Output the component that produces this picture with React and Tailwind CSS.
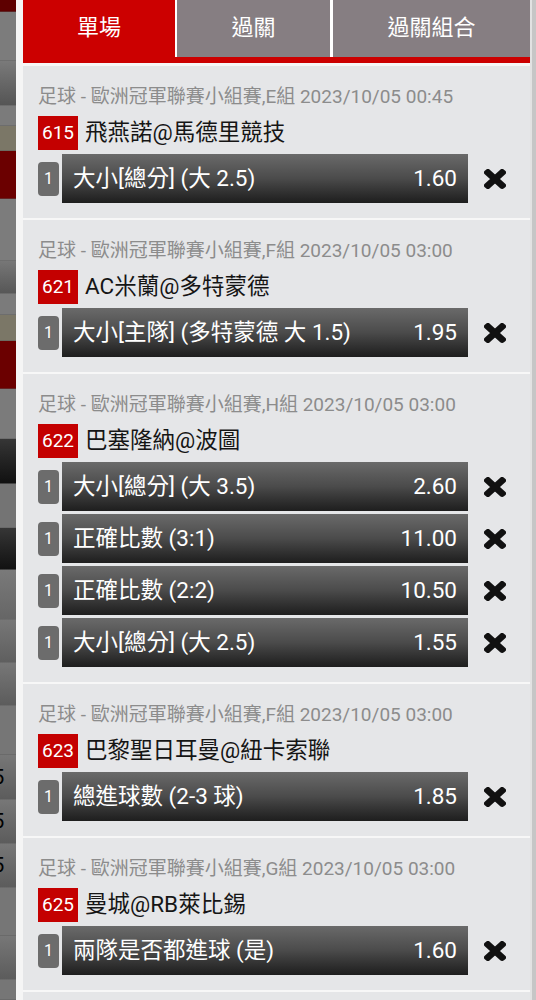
import React from 'react'

const FONT = { fontFamily: 'Roboto, "Noto Sans CJK TC", sans-serif' }

// dimmed page behind the slip, only a sliver shows on the left
const STRIP = [
  { h: 12, c: 'bg-[#5e0000]' },
  { h: 50, c: 'bg-[#7c7c7c]' },
  { h: 45, c: 'bg-linear-to-b from-[#7a7a7a] to-[#555]' },
  { h: 21, c: 'bg-[#7b7b7b]' },
  { h: 25, c: 'bg-[#7b7767]' },
  { h: 49, c: 'bg-[#6b0000]' },
  { h: 62, c: 'bg-[#7c7c7c]' },
  { h: 34, c: 'bg-linear-to-b from-[#777] to-[#575757]' },
  { h: 21, c: 'bg-[#7b7b7b]' },
  { h: 26, c: 'bg-[#7b7767]' },
  { h: 49, c: 'bg-[#6b0000]' },
  { h: 51, c: 'bg-[#7b7b7b]' },
  { h: 45, c: 'bg-linear-to-b from-[#363636] to-[#111]' },
  { h: 45, c: 'bg-[#747474]' },
  { h: 42, c: 'bg-linear-to-b from-[#363636] to-[#121212]' },
  { h: 51, c: 'bg-linear-to-b from-[#7a7a7a] to-[#666]' },
  { h: 44, c: 'bg-linear-to-b from-[#777] to-[#5f5f5f]' },
  { h: 43, c: 'bg-linear-to-b from-[#777] to-[#5c5c5c]' },
  { h: 50, c: 'bg-[#767676]' },
  { h: 45, c: 'bg-linear-to-b from-[#777] to-[#5c5c5c]', five: true },
  { h: 45, c: 'bg-linear-to-b from-[#777] to-[#5c5c5c]', five: true },
  { h: 44, c: 'bg-linear-to-b from-[#777] to-[#5c5c5c]', five: true },
  { h: 49, c: 'bg-[#767676]' },
  { h: 45, c: 'bg-linear-to-b from-[#777] to-[#5c5c5c]' },
  { h: 20, c: 'bg-[#767676]' },
]

const CARDS = [
  {
    league: '足球 - 歐洲冠軍聯賽小組賽,E組 2023/10/05 00:45',
    no: '615', match: '飛燕諾@馬德里競技',
    bets: [{ name: '大小[總分] (大 2.5)', odds: '1.60' }],
  },
  {
    league: '足球 - 歐洲冠軍聯賽小組賽,F組 2023/10/05 03:00',
    no: '621', match: 'AC米蘭@多特蒙德',
    bets: [{ name: '大小[主隊] (多特蒙德 大 1.5)', odds: '1.95' }],
  },
  {
    league: '足球 - 歐洲冠軍聯賽小組賽,H組 2023/10/05 03:00',
    no: '622', match: '巴塞隆納@波圖',
    bets: [
      { name: '大小[總分] (大 3.5)', odds: '2.60' },
      { name: '正確比數 (3:1)', odds: '11.00' },
      { name: '正確比數 (2:2)', odds: '10.50' },
      { name: '大小[總分] (大 2.5)', odds: '1.55' },
    ],
  },
  {
    league: '足球 - 歐洲冠軍聯賽小組賽,F組 2023/10/05 03:00',
    no: '623', match: '巴黎聖日耳曼@紐卡索聯',
    bets: [{ name: '總進球數 (2-3 球)', odds: '1.85' }],
  },
  {
    league: '足球 - 歐洲冠軍聯賽小組賽,G組 2023/10/05 03:00',
    no: '625', match: '曼城@RB萊比錫',
    bets: [{ name: '兩隊是否都進球 (是)', odds: '1.60' }],
  },
]

function CloseIcon() {
  return (
    <svg className="w-[22px] h-[20px]" viewBox="-14 66 380 380" preserveAspectRatio="none" fill="#111" stroke="#111" strokeWidth={28} strokeLinejoin="round">
      <path d="M242.72 256l100.07-100.07c12.28-12.28 12.28-32.19 0-44.48l-22.24-22.24c-12.28-12.28-32.19-12.28-44.48 0L176 189.28 75.930 89.21c-12.28-12.28-32.19-12.28-44.48 0L9.21 111.45c-12.28 12.28-12.28 32.19 0 44.48L109.28 256 9.21 356.07c-12.28 12.28-12.28 32.19 0 44.48l22.24 22.24c12.28 12.28 32.2 12.28 44.48 0L176 322.72l100.07 100.07c12.28 12.28 32.2 12.28 44.48 0l22.24-22.24c12.28-12.28 12.28-32.19 0-44.48L242.72 256z" />
    </svg>
  )
}

function BetRow({ bet }) {
  return (
    <div className="flex items-center h-[49px]">
      <div className="w-[21px] h-[34px] rounded-[4px] bg-[#6c6c6c] text-white text-[16px] flex items-center justify-center">1</div>
      <div className="ml-[3px] w-[406px] h-full flex items-center justify-between pl-[11px] pr-[11px] text-white text-[22.5px] bg-linear-to-b from-[#6a6a6a] via-[#4b4b4b] to-[#1e1e1e]">
        <span>{bet.name}</span>
        <span>{bet.odds}</span>
      </div>
      <div className="ml-[16px] flex items-center">
        <CloseIcon />
      </div>
    </div>
  )
}

function Card({ card }) {
  return (
    <div className="pl-[15px] pt-[19px] pb-[15px] border-b-2 border-[#f7f7f7]">
      <div className="text-[19px] leading-[24px] text-[#8c8c8c] whitespace-nowrap">{card.league}</div>
      <div className="mt-[7px] flex items-center h-[34px]">
        <span className="h-[34px] px-[4px] bg-[#c40000] text-white text-[19px] flex items-center">{card.no}</span>
        <span className="ml-[7px] text-[22.5px] text-[#151515]">{card.match}</span>
      </div>
      <div className="mt-[4px] flex flex-col gap-[3px]">
        {card.bets.map((b, i) => <BetRow key={i} bet={b} />)}
      </div>
    </div>
  )
}

export default function App() {
  return (
    <div className="flex w-[536px] h-[1000px] overflow-hidden bg-[#e5e6e8]" style={FONT}>
      {/* background page */}
      <div className="w-[16px] flex flex-col overflow-hidden">
        {STRIP.map((s, i) => (
          <div key={i} className={`${s.c} flex items-center border-b border-[#5a5a5a]/40 text-black text-[20px]`} style={{ height: s.h }}>
            {s.five && <span className="-ml-[7px]">5</span>}
          </div>
        ))}
      </div>
      <div className="w-[7px] bg-[#f5f5f5]" />

      {/* slip panel */}
      <div className="w-[507px] flex flex-col bg-[#e5e6e8]">
        <div className="flex h-[57px] bg-white text-white text-[22px]">
          <div className="w-[152px] bg-[#cc0000] flex items-center justify-center pb-[3px]">單場</div>
          <div className="ml-[2px] w-[153px] bg-[#867e82] flex items-center justify-center pb-[3px]">過關</div>
          <div className="ml-[3px] flex-1 bg-[#867e82] flex items-center justify-center pb-[3px]">過關組合</div>
        </div>
        <div className="h-[6px] bg-[#cc0000]" />
        <div className="h-[3px] bg-[#f7f7f7]" />
        {CARDS.map((c, i) => <Card key={i} card={c} />)}
      </div>

      {/* scroll track */}
      <div className="w-[2px] bg-[#e2e2e2]" />
      <div className="w-[4px] bg-[#c6c6c6]" />
    </div>
  )
}
